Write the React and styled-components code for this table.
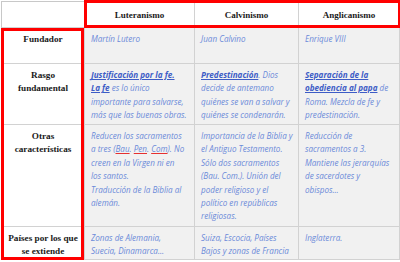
import React from 'react';
import styled, { createGlobalStyle } from 'styled-components';

const GlobalStyle = createGlobalStyle`
  html, body {
    margin: 0;
    padding: 0;
    background: #ffffff;
  }
`;

const serif = `"Liberation Serif", "Times New Roman", serif`;

const Table = styled.div`
  display: grid;
  grid-template-columns: 83px 110px 104px 101px;
  grid-template-rows: 26px 36px 61px 102px 33px;
  width: 398px;
  border-top: 1px solid #c8c8c8;
  border-left: 1px solid #c8c8c8;
  box-sizing: border-box;
  margin: 1px 0 0 1px;
`;

const Cell = styled.div`
  box-sizing: border-box;
  border-right: 1px solid #d2d2d2;
  border-bottom: 1px solid #d2d2d2;
  background: ${p => (p.$shaded ? '#f1f1f1' : '#ffffff')};
  grid-column: ${p => p.$col};
  grid-row: ${p => p.$row};
`;

const HeadCell = styled(Cell)`
  display: flex;
  align-items: center;
  justify-content: center;
  padding-top: 1px;
  font-family: ${serif};
  font-weight: bold;
  font-size: 9px;
  color: #1a1a1a;
`;

const RowLabel = styled(Cell)`
  padding: 5px 2px 0;
  text-align: center;
  font-family: ${serif};
  font-weight: bold;
  font-size: 9.2px;
  line-height: 13.4px;
  color: #1a1a1a;
`;

const DataCell = styled(Cell)`
  padding: 4px 4px 0 6px;
  font-family: "Open Sans", sans-serif;
  font-style: italic;
  font-size: 8.1px;
  line-height: 13.4px;
  color: #6b8ad9;
  white-space: nowrap;
`;

const Link = styled.span`
  color: #3d5cc6;
  font-weight: bold;
  text-decoration: underline;
`;

const Misspelled = styled.span`
  text-decoration: underline;
  text-decoration-color: #e53030;
`;

const Frame = styled.div`
  grid-column: ${p => p.$col};
  grid-row: ${p => p.$row};
  border: 3px solid #ff0000;
  z-index: 1;
  pointer-events: none;
  margin: ${p => p.$margin};
`;

const lines = (...parts) =>
  parts.map((p, i) => (
    <React.Fragment key={i}>
      {p}
      {i < parts.length - 1 && <br />}
    </React.Fragment>
  ));

export default function App() {
  return (
    <>
      <GlobalStyle />
      <Table>
        <Cell $col="1" $row="1" />
        <HeadCell $col="2" $row="1">Luteranismo</HeadCell>
        <HeadCell $col="3" $row="1">Calvinismo</HeadCell>
        <HeadCell $col="4" $row="1">Anglicanismo</HeadCell>

        <RowLabel $col="1" $row="2">Fundador</RowLabel>
        <DataCell $shaded $col="2" $row="2">Martín Lutero</DataCell>
        <DataCell $shaded $col="3" $row="2">Juan Calvino</DataCell>
        <DataCell $shaded $col="4" $row="2">Enrique VIII</DataCell>

        <RowLabel $col="1" $row="3">{lines('Rasgo', 'fundamental')}</RowLabel>
        <DataCell $shaded $col="2" $row="3">
          {lines(
            <Link>Justificación por la fe.</Link>,
            <><Link>La fe</Link> es lo único</>,
            'importante para salvarse,',
            'más que las buenas obras.'
          )}
        </DataCell>
        <DataCell $shaded $col="3" $row="3">
          {lines(
            <><Link>Predestinación</Link>. Dios</>,
            'decide de antemano',
            'quiénes se van a salvar y',
            'quiénes se condenarán.'
          )}
        </DataCell>
        <DataCell $shaded $col="4" $row="3">
          {lines(
            <Link>Separación de la</Link>,
            <><Link>obediencia al papa</Link> de</>,
            'Roma. Mezcla de fe y',
            'predestinación.'
          )}
        </DataCell>

        <RowLabel $col="1" $row="4">{lines('Otras', 'características')}</RowLabel>
        <DataCell $shaded $col="2" $row="4">
          {lines(
            'Reducen los sacramentos',
            <>a tres (<Misspelled>Bau</Misspelled>. <Misspelled>Pen</Misspelled>. <Misspelled>Com</Misspelled>). No</>,
            'creen en la Virgen ni en',
            'los santos.',
            'Traducción de la Biblia al',
            'alemán.'
          )}
        </DataCell>
        <DataCell $shaded $col="3" $row="4">
          {lines(
            'Importancia de la Biblia y',
            'el Antiguo Testamento.',
            'Sólo dos sacramentos',
            '(Bau. Com.). Unión del',
            'poder religioso y el',
            'político en repúblicas',
            'religiosas.'
          )}
        </DataCell>
        <DataCell $shaded $col="4" $row="4">
          {lines(
            'Reducción de',
            'sacramentos a 3.',
            'Mantiene las jerarquías',
            'de sacerdotes y',
            'obispos...'
          )}
        </DataCell>

        <RowLabel $col="1" $row="5">{lines('Países por los que', 'se extiende')}</RowLabel>
        <DataCell $shaded $col="2" $row="5">
          {lines('Zonas de Alemania,', 'Suecia, Dinamarca...')}
        </DataCell>
        <DataCell $shaded $col="3" $row="5">
          {lines('Suiza, Escocia, Países', 'Bajos y zonas de Francia')}
        </DataCell>
        <DataCell $shaded $col="4" $row="5">Inglaterra.</DataCell>

        <Frame $col="2 / 5" $row="1" $margin="-2px -1px 0 -1px" />
        <Frame $col="1" $row="2 / 6" $margin="0 1px 0 -1px" />
      </Table>
    </>
  );
}
